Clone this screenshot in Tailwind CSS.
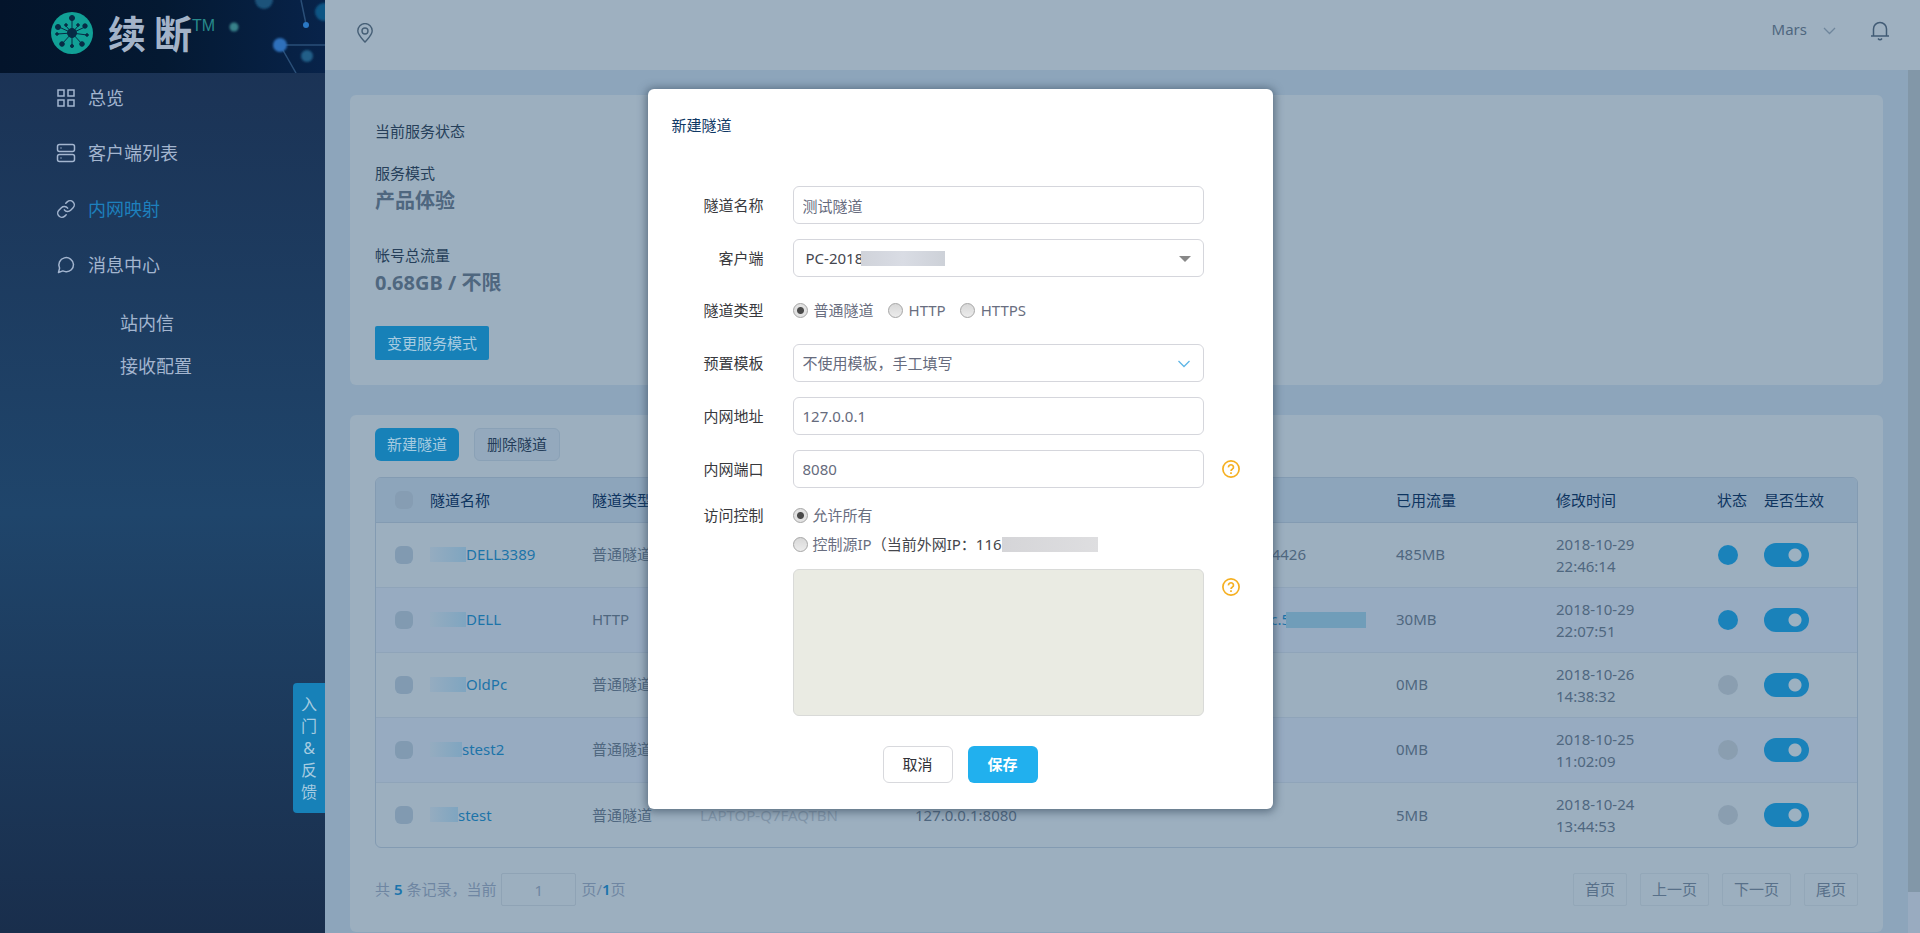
<!DOCTYPE html>
<html lang="zh-CN">
<head>
<meta charset="utf-8">
<title>续断</title>
<script src="https://cdn.jsdelivr.net/npm/@tailwindcss/browser@4"></script>
</head>
<body class="relative flex h-screen overflow-hidden bg-[#8da5bb] font-['Noto_Sans','Noto_Sans_CJK_SC',sans-serif] text-[15px] text-[#4f677f]">

<!-- Sidebar -->
<aside class="flex w-[325px] shrink-0 flex-col bg-linear-to-b from-[#1a3052] via-[#1f456b] via-55% to-[#192e4c] text-[#a3b5cf]">
  <div class="relative flex h-[73px] items-start gap-[15px] overflow-hidden bg-linear-to-r from-[#03142b] via-[#041932] to-[#08234a] pl-[51px] pt-3">
    <svg class="absolute right-0 top-0" width="100" height="73" viewBox="0 0 100 73" aria-hidden="true">
      <defs><filter id="soft"><feGaussianBlur stdDeviation="1.2"/></filter></defs>
      <g stroke="#2a4f78" stroke-width="1.500" fill="none"><path d="M55 45H100M55 45L71 73M76 0L81 24"/></g>
      <g filter="url(#soft)">
        <circle cx="39" cy="0" r="9" fill="#1c527a"/><circle cx="99" cy="12" r="9" fill="#0f5584"/>
        <circle cx="55" cy="45" r="7" fill="#2d70bb"/><circle cx="82" cy="56" r="6" fill="#205e88"/>
        <circle cx="9" cy="27" r="4.500" fill="#38818a"/>
      </g>
      <circle cx="81" cy="25" r="3" fill="#2b78c4"/>
    </svg>
    <svg width="42" height="42" viewBox="0 0 42 42" aria-hidden="true">
      <circle cx="21" cy="21" r="21" fill="#11a096"/>
      <g stroke="#072b45" stroke-width="1" fill="#072b45">
        <circle cx="21" cy="21" r="4.500"/>
        <path d="M21 21V7M21 21L8 15M21 21L34 15M21 21L15 14M21 21L27 14M21 21L6 22M21 21L36 23M21 21L11 32M21 21L31 32M21 21V34" />
        <circle cx="21" cy="6" r="2.500"/><circle cx="7" cy="15" r="2.500"/><circle cx="34" cy="14" r="2.200"/><circle cx="15" cy="13" r="1.300"/><circle cx="27" cy="13" r="1.300"/><circle cx="6" cy="22" r="1.300"/><circle cx="36" cy="23" r="1.300"/><circle cx="11" cy="32" r="2.300"/><circle cx="31" cy="32" r="2.300"/><circle cx="21" cy="34" r="1.500"/>
      </g>
    </svg>
    <div class="flex items-start text-[#a3b3c8]"><span class="flex gap-2 text-[38px] font-bold leading-[42px]"><span>续</span><span>断</span></span><span class="font-['Liberation_Sans',sans-serif] text-base leading-7 text-[#28898b]">TM</span></div>
  </div>
  <nav class="pl-14 text-lg">
    <a href="#" class="flex h-[50px] items-center gap-3"><svg width="20" height="20" viewBox="0 0 20 20" fill="none" stroke="currentColor" stroke-width="1.500"><path d="M2 2h6v6H2zM12 2h6v6h-6zM2 12h6v6H2zM12 12h6v6h-6z"/></svg>总览</a>
    <a href="#" class="flex h-14 items-center gap-3 pt-1"><svg width="20" height="20" viewBox="0 0 20 20" fill="none" stroke="currentColor" stroke-width="1.500"><rect x="1.500" y="1.500" width="17" height="7" rx="2"/><rect x="1.500" y="11.500" width="17" height="7" rx="2"/><path d="M4.500 5h1M4.500 15h1"/></svg>客户端列表</a>
    <a href="#" class="flex h-14 items-center gap-3 pt-1 text-[#1d80bd]"><svg class="text-[#a3b5cf]" width="20" height="20" viewBox="0 0 24 24" fill="none" stroke="currentColor" stroke-width="1.800" stroke-linecap="round"><path d="M10 13a5 5 0 0 0 7.540.540l3-3a5 5 0 0 0-7.070-7.070l-1.720 1.710"/><path d="M14 11a5 5 0 0 0-7.540-.540l-3 3a5 5 0 0 0 7.070 7.070l1.710-1.710"/></svg>内网映射</a>
    <a href="#" class="flex h-14 items-center gap-3 pt-1"><svg width="20" height="20" viewBox="0 0 24 24" fill="none" stroke="currentColor" stroke-width="1.800" stroke-linejoin="round"><path d="M21 11.500a8.400 8.400 0 0 1-9 8.500 9 9 0 0 1-3.800-.9L3 21l1.300-5.200A8.800 8.800 0 1 1 21 11.500z"/></svg>消息中心</a>
    <div class="mt-[7px] flex flex-col pl-16">
      <a href="#" class="flex h-[50px] items-center">站内信</a>
      <a href="#" class="flex h-9 items-center">接收配置</a>
    </div>
  </nav>
</aside>
<button class="absolute left-[293px] top-[683px] flex w-8 flex-col items-center rounded-l-sm bg-[#1781b8] py-[10px] text-base leading-[22px] text-[#a6cbe0]"><span>入</span><span>门</span><span>&amp;</span><span>反</span><span>馈</span></button>

<!-- Page -->
<div class="flex min-w-0 flex-1 flex-col">
  <header class="flex h-[70px] shrink-0 items-center justify-between bg-[#9eb0c0] pb-2 pl-8 pr-[30px]">
    <svg width="16" height="20" viewBox="0 0 16 20" class="mt-1" fill="none" stroke="#465f76" stroke-width="1.400"><path d="M8 19C5 15.500.8 12 .8 7.800a7.200 7.200 0 0 1 14.400 0C15.200 12 11 15.500 8 19z"/><circle cx="8" cy="8" r="3"/></svg>
    <div class="flex items-center">
      <button class="flex items-center gap-4 text-[15px]"><span class="pb-[3px]">Mars</span><svg width="13" height="8" viewBox="0 0 13 8" fill="none" stroke="#6f869c" stroke-width="1.300"><path d="M1 1l5.500 5.500L12 1"/></svg></button>
      <button class="ml-[34px]" aria-label="通知"><svg width="20" height="20" viewBox="0 0 20 20" fill="none" stroke="#415b75" stroke-width="1.500"><path d="M1 15h18M3.500 15V8a6.500 6.500 0 0 1 13 0v7M8 17.500q2 2.500 4 0"/></svg></button>
    </div>
  </header>

  <div class="flex min-h-0 flex-1">
    <main class="min-w-0 flex-1 overflow-hidden px-[25px] pt-[25px]">
      <section class="h-[290px] rounded-md bg-[#9cafbf] px-[25px] pt-6">
        <h2 class="leading-6 text-[#263f5a]">当前服务状态</h2>
        <p class="mt-[18px] leading-6 text-[#263f5a]">服务模式</p>
        <p class="text-xl font-bold leading-8">产品体验</p>
        <p class="mt-[26px] leading-6 text-[#263f5a]">帐号总流量</p>
        <p class="text-xl font-bold leading-8">0.68GB / 不限</p>
        <button class="mt-[27px] h-[34px] rounded-xs bg-[#1781b8] px-3 text-[#a6cbe0]">变更服务模式</button>
      </section>

      <section class="mt-[30px] rounded-md bg-[#9cafbf] px-[25px] pb-[26px] pt-[13px]">
        <div class="flex gap-[15px]">
          <button class="h-[33px] rounded-md bg-[#1781b8] px-3 text-[#a6cbe0]">新建隧道</button>
          <button class="h-[33px] rounded-md border border-[#8aa1b6] bg-[#94a9bd] px-3 text-[#243d59]">删除隧道</button>
        </div>
        <div class="mt-4 overflow-hidden rounded-md border border-[#839bb2]">
          <table class="w-full table-fixed text-left">
            <colgroup><col class="w-[54px]"><col class="w-[162px]"><col class="w-[108px]"><col class="w-[215px]"><col class="w-[215px]"><col><col class="w-[160px]"><col class="w-[161px]"><col class="w-[47px]"><col class="w-[93px]"></colgroup>
            <thead class="bg-[#8da5bb] text-[#0d345f]">
              <tr class="h-11 border-b border-[#839bb2] [&>th]:p-0 [&>th]:font-normal">
                <th class="align-middle"><input type="checkbox" aria-label="全选" class="ml-[19px] block size-[18px] appearance-none rounded-md bg-[#869db3]"></th>
                <th>隧道名称</th><th>隧道类型</th><th></th><th></th><th></th><th>已用流量</th><th>修改时间</th><th>状态</th><th>是否生效</th>
              </tr>
            </thead>
            <tbody id="rows"></tbody>
          </table>
        </div>
        <div class="mt-[25px] flex items-center justify-between text-[#6f86a2]">
          <div class="flex items-center"><label for="page">共 <b class="font-semibold text-[#1b74ac]">5</b> 条记录，当前</label><input id="page" value="1" class="mx-[5px] h-[33px] w-[75px] rounded-xs border border-[#8fa3b5] text-center"><span>页/<b class="font-semibold text-[#1b74ac]">1</b>页</span></div>
          <div class="flex gap-[13px] [&>button]:h-[33px] [&>button]:rounded-xs [&>button]:border [&>button]:border-[#93a7b8] [&>button]:px-[11px] [&>button]:text-[#587089]"><button>首页</button><button>上一页</button><button>下一页</button><button>尾页</button></div>
        </div>
      </section>
    </main>
    <div class="w-3 shrink-0 bg-[#99abc0]"><div class="h-[822px] bg-[#8297a8]"></div></div>
  </div>
</div>

<!-- Dialog -->
<div class="absolute inset-0 flex justify-center pt-[89px]">
  <form role="dialog" aria-labelledby="dialog-title" class="h-fit w-[625px] rounded-md bg-white px-6 pb-[26px] pt-6 text-[#666b7d] shadow-[0_1px_8px_2px_rgba(50,70,90,0.6)] [&_label]:text-[#696e80]">
    <h2 id="dialog-title" class="leading-6 text-[#0f3864]">新建隧道</h2>
    <div class="mt-[49px] grid grid-cols-[103px_411px_27px] items-center gap-x-[18px] gap-y-[15px] [&_.name]:pr-[11px] [&_.name]:text-right [&_.name]:text-[#38393d]">
      <label class="name block" for="f1">隧道名称</label><input id="f1" value="测试隧道" class="h-[38px] rounded-md border border-[#d5d6dc] px-[9px]"><span></span>

      <label class="name block" for="f2">客户端</label>
      <div class="relative"><select id="f2" class="block h-[38px] w-full appearance-none rounded-md border border-[#d5d6dc] px-3 text-[#44464f]"><option>PC-2018</option></select>
        <span class="absolute left-[68px] top-3 h-[15px] w-[84px] bg-linear-to-r from-[#d0d3da] via-[#d9dce4] to-[#cdd1d8]"></span>
        <svg class="pointer-events-none absolute right-[13px] top-[17px]" width="12" height="6"><path d="M0 0h12L6 6z" fill="#888"/></svg></div><span></span>

      <span class="name">隧道类型</span>
      <div class="flex h-[37px] items-center gap-[14px] [&_label]:flex [&_label]:items-center [&_label]:gap-[6px]">
        <label><input type="radio" name="kind" checked class="radio">普通隧道</label>
        <label><input type="radio" name="kind" class="radio">HTTP</label>
        <label><input type="radio" name="kind" class="radio">HTTPS</label>
      </div><span></span>

      <label class="name block" for="f3">预置模板</label>
      <div class="relative"><select id="f3" class="block h-[38px] w-full appearance-none rounded-md border border-[#d5d6dc] px-[9px]"><option>不使用模板，手工填写</option></select>
        <svg class="pointer-events-none absolute right-[14px] top-4" width="12" height="8" viewBox="0 0 12 8" fill="none" stroke="#5fb6e6" stroke-width="1.300"><path d="M.5 1L6 6.500 11.500 1"/></svg></div><span></span>

      <label class="name block" for="f4">内网地址</label><input id="f4" value="127.0.0.1" class="h-[38px] rounded-md border border-[#d5d6dc] px-[9px]"><span></span>
      <label class="name block" for="f5">内网端口</label><input id="f5" value="8080" class="h-[38px] rounded-md border border-[#d5d6dc] px-[9px]">
      <button type="button" aria-label="端口说明" class="size-[18px]"><svg width="18" height="18" viewBox="0 0 18 18" fill="none" stroke="#f5b022" stroke-width="1.700"><circle cx="9" cy="9" r="8.100"/><path d="M6.500 7.300a2.500 2.300 0 1 1 4 1.600q-1.500.9-1.500 2M9 12.200v1.700"/></svg></button>
    </div>
    <div class="mt-3 grid grid-cols-[103px_411px_27px] gap-x-[18px]">
      <span class="pr-[11px] text-right leading-[30px] text-[#38393d]">访问控制</span>
      <div>
        <label class="flex h-[30px] items-center gap-[5px]"><input type="radio" name="access" checked class="radio">允许所有</label>
        <div class="flex h-7 items-center"><label class="flex items-center gap-[5px]"><input type="radio" name="access" class="radio">控制源IP</label><span class="text-[#45464c]">（当前外网IP：116</span><span class="h-[15px] w-24 bg-linear-to-r from-[#d5d5d8] to-[#dedee0]"></span></div>
      </div><span></span>
    </div>
    <div class="mt-[11px] grid grid-cols-[103px_411px_27px] gap-x-[18px]">
      <span></span>
      <textarea aria-label="源IP列表" class="block h-[147px] resize-none rounded-md border border-[#d9dad8] bg-[#eaebe3]"></textarea>
      <button type="button" aria-label="源IP说明" class="mt-[9px] size-[18px]"><svg width="18" height="18" viewBox="0 0 18 18" fill="none" stroke="#f5b022" stroke-width="1.700"><circle cx="9" cy="9" r="8.100"/><path d="M6.500 7.300a2.500 2.300 0 1 1 4 1.600q-1.500.9-1.500 2M9 12.200v1.700"/></svg></button>
    </div>
    <div class="mt-[30px] flex justify-center gap-[15px]">
      <button type="button" class="h-[37px] w-[70px] rounded-md border border-[#d8d9dd] text-[#303238]">取消</button>
      <button type="button" class="h-[37px] w-[70px] rounded-md bg-[#21b0ee] font-semibold text-white">保存</button>
    </div>
  </form>
</div>

<script>
const radioClass = "m-0 size-[15px] shrink-0 appearance-none rounded-full border border-[#a5a5a5] bg-linear-to-b from-[#d8d8d8] to-[#ececec] checked:bg-[radial-gradient(circle,#4a4a4a_0_3px,#e2e2e2_4px)]";
document.querySelectorAll(".radio").forEach(r => { r.className = radioClass; });

const data = [
  ["DELL3389", 36, "普通隧道", "", "", "4426", 0, "485MB", "2018-10-29", "22:46:14", true],
  ["DELL", 36, "HTTP", "", "", "c.5", 80, "30MB", "2018-10-29", "22:07:51", true],
  ["OldPc", 36, "普通隧道", "", "", "", 0, "0MB", "2018-10-26", "14:38:32", false],
  ["stest2", 32, "普通隧道", "", "", "", 0, "0MB", "2018-10-25", "11:02:09", false],
  ["stest", 28, "普通隧道", "LAPTOP-Q7FAQTBN", "127.0.0.1:8080", "", 0, "5MB", "2018-10-24", "13:44:53", false],
];
document.getElementById("rows").innerHTML = data.map((d, i) => `
<tr class="h-[65px] border-t border-[#8fa4b9] ${i % 2 ? "bg-[#97abc1]" : ""} [&>td]:p-0">
  <td><input type="checkbox" aria-label="选择 ${d[0]}" class="ml-[19px] block size-[18px] appearance-none rounded-md bg-[#819ab1]"></td>
  <td><a href="#" class="flex items-center text-[#1c74a9]"><span class="h-[15px] bg-linear-to-r from-[#95acc0] to-[#7fa5c0]" style="width:${d[1]}px"></span>${d[0]}</a></td>
  <td>${d[2]}</td><td class="text-[#8195a8]">${d[3]}</td><td>${d[4]}</td>
  <td><span class="flex items-center justify-end ${d[6] ? "pr-[30px] text-[#1c74a9]" : "pr-[90px]"}">${d[5]}${d[6] ? '<span class="-ml-1 h-4 w-20 bg-[#709db9]"></span>' : ""}</span></td>
  <td>${d[7]}</td><td class="leading-[22px]">${d[8]}<br>${d[9]}</td>
  <td><span class="ml-px block size-5 rounded-full ${d[10] ? "bg-[#1a82ba]" : "bg-[#8a9eb0]"}"></span></td>
  <td><input type="checkbox" role="switch" aria-label="是否生效" checked class="block h-6 w-[45px] appearance-none rounded-full bg-[#1a82ba] bg-[radial-gradient(circle_at_31px_12px,#9cb1c1_6px,transparent_7px)]"></td>
</tr>`).join("");
</script>
</body>
</html>
